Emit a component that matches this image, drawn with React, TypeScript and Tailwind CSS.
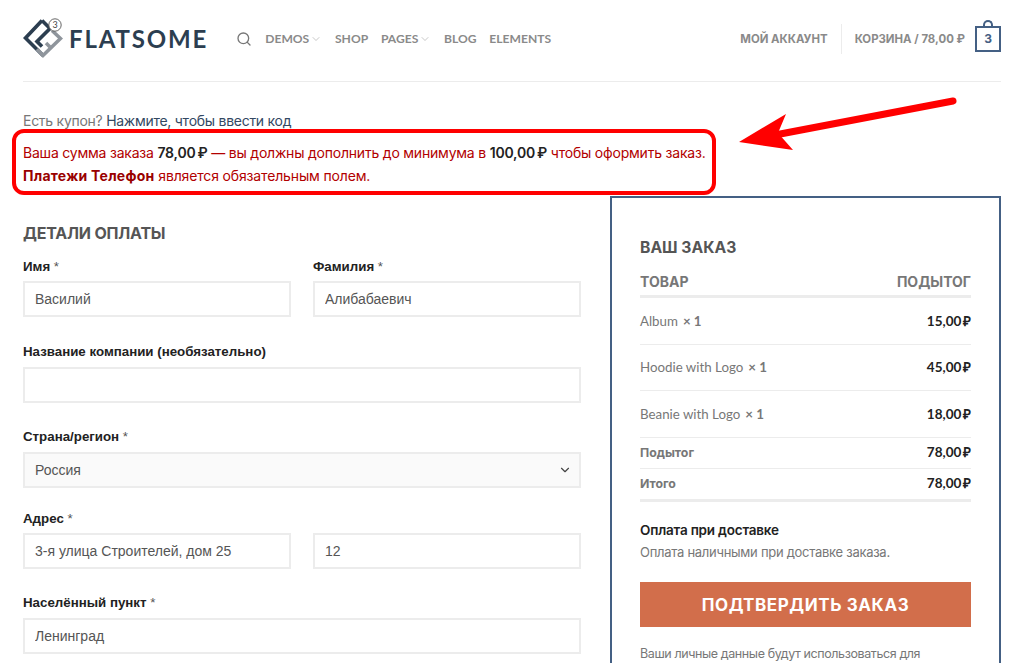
import { ChevronDown, Search } from "lucide-react"

const navItems = [
  { label: "DEMOS", caret: true },
  { label: "SHOP" },
  { label: "PAGES", caret: true },
  { label: "BLOG" },
  { label: "ELEMENTS" },
]

const products = [
  { name: "Album", price: "15,00\u2009₽" },
  { name: "Hoodie with Logo", price: "45,00\u2009₽" },
  { name: "Beanie with Logo", price: "18,00\u2009₽" },
]

function Logo() {
  return (
    <svg width="40" height="42" viewBox="0 0 40 42" fill="none">
      <path d="M19 2.5 L2.5 20 L20 37.5" stroke="#2c3e50" strokeWidth="3.6" />
      <path d="M19 2.5 L27 10.5 L14 23.5 L19 28.5" stroke="#2c3e50" strokeWidth="3.6" />
      <path d="M29 12.5 L37.5 20.5 L20 37.5 L14 31" stroke="#8f959c" strokeWidth="3.6" />
      <path d="M23 25 L27 29" stroke="#8f959c" strokeWidth="3.6" />
      <circle cx="32" cy="7" r="6.2" fill="#fff" stroke="#555" strokeWidth="0.9" />
      <text x="32" y="10" textAnchor="middle" fontSize="9" fill="#444" fontFamily="Lato, sans-serif">
        3
      </text>
    </svg>
  )
}

function Field({ value, className = "" }: { value?: string; className?: string }) {
  return (
    <input
      readOnly
      value={value ?? ""}
      className={`h-9 w-full border-2 border-[#ececec] bg-white px-[10px] font-['Liberation_Sans',sans-serif] text-sm text-[#555] outline-none ${className}`}
    />
  )
}

function Label({ text, required, className = "mb-[7px]" }: { text: string; required?: boolean; className?: string }) {
  return (
    <div className={`h-[17px] font-['Liberation_Sans',sans-serif] text-[13.3px] leading-[17px] font-bold text-[#222] ${className}`}>
      {text}
      {required && <span className="font-normal text-[#555]"> *</span>}
    </div>
  )
}

export default function App() {
  return (
    <div className="relative h-[663px] overflow-hidden bg-white px-[23px] font-['Inter',sans-serif]">
      {/* Header */}
      <header className="flex h-[82px] items-center border-b border-[#ececec] pb-[3px]">
        <Logo />
        <span className="ml-[6px] font-['Lato',sans-serif] text-[24px] font-bold tracking-[1.85px] text-[#2c3e50]">
          FLATSOME
        </span>
        <Search className="ml-[28px] h-[16px] w-[16px] text-[#777]" strokeWidth={2} />
        <nav className="ml-[13px] flex items-center gap-[12.75px] font-['Lato',sans-serif] text-[12.1px] font-bold text-[#8a8a8a]">
          {navItems.map((item) => (
            <span key={item.label} className="flex items-center">
              {item.label}
              {item.caret && <ChevronDown className="ml-[1px] h-[12px] w-[12px] text-[#aaa]" strokeWidth={1.3} />}
            </span>
          ))}
        </nav>
        <div className="ml-auto flex items-center text-[11.4px] font-bold text-[#8a8a8a]">
          <span className="pt-[1px]">МОЙ АККАУНТ</span>
          <div className="mx-[13px] h-[30px] w-px bg-[#ececec]" />
          <span className="pt-[1px]">КОРЗИНА / 78,00 ₽</span>
          <div className="relative ml-[10px] flex h-[26px] w-[26px] items-center justify-center border-2 border-[#446084] text-[12px] font-bold text-[#446084]">
            3
            <div className="absolute -top-[8px] left-[6px] h-[7px] w-[10px] rounded-t-full border-2 border-b-0 border-[#446084]" />
          </div>
        </div>
      </header>

      {/* Notices */}
      <div className="mt-[31px] h-[16px] text-sm leading-[16px] tracking-[-0.27px] text-[#777]">
        Есть купон? <span className="text-[#334862]">Нажмите, чтобы ввести код</span>
      </div>
      <div className="-mx-[11px] h-[66px] w-[704px] rounded-xl border-4 border-[#f00] px-[7px] pt-[8px] text-sm leading-[23px] tracking-[-0.21px] whitespace-nowrap text-[#b20000]">
        <div>
          Ваша сумма заказа <b className="font-semibold text-[#222]">78,00{"\u2009"}₽</b> — вы должны дополнить до минимума в{" "}
          <b className="font-semibold text-[#222]">100,00{"\u2009"}₽</b> чтобы оформить заказ.
        </div>
        <div className="tracking-[-0.15px]">
          <b className="font-bold tracking-[0.25px] text-[#990000]">Платежи Телефон</b> является обязательным полем.
        </div>
      </div>

      <div className="mt-[1px] flex gap-[29px]">
        {/* Billing */}
        <div className="w-[558px] shrink-0 pt-[27px]">
          <h3 className="mb-[15px] h-[20px] text-[16px] leading-[20px] font-bold tracking-[-0.2px] text-[#555]">ДЕТАЛИ ОПЛАТЫ</h3>
          <div className="grid grid-cols-2 gap-x-[22px]">
            <div>
              <Label text="Имя" required className="mb-[6px]" />
              <Field value="Василий" />
            </div>
            <div>
              <Label text="Фамилия" required className="mb-[6px]" />
              <Field value="Алибабаевич" />
            </div>
          </div>
          <div className="mt-[26px]">
            <Label text="Название компании (необязательно)" />
            <Field />
          </div>
          <div className="mt-[25px]">
            <Label text="Страна/регион" required />
            <div className="flex h-9 items-center justify-between border-2 border-[#ececec] bg-[#fafafa] pr-[7px] pl-[10px] font-['Liberation_Sans',sans-serif] text-sm text-[#555]">
              Россия
              <ChevronDown className="h-[14px] w-[14px] text-[#444]" strokeWidth={2} />
            </div>
          </div>
          <div className="mt-[22px]">
            <Label text="Адрес" required className="mb-[6px]" />
            <div className="grid grid-cols-2 gap-x-[22px]">
              <Field value="3-я улица Строителей, дом 25" />
              <Field value="12" />
            </div>
          </div>
          <div className="mt-[25px]">
            <Label text="Населённый пункт" required />
            <Field value="Ленинград" />
          </div>
        </div>

        {/* Order */}
        <div className="h-[520px] w-[391px] shrink-0 border-2 border-[#446084] px-[28px] pt-[40px]">
          <h3 className="mb-[16px] h-[20px] text-[15.7px] leading-[20px] font-bold text-[#555]">ВАШ ЗАКАЗ</h3>
          <div className="flex h-[24px] justify-between border-b-[3px] border-[#ececec] pb-[4px] text-sm leading-[16px] font-bold text-[#777]">
            <span>ТОВАР</span>
            <span>ПОДЫТОГ</span>
          </div>
          {products.map((p) => (
            <div key={p.name} className="flex h-[46.5px] items-center justify-between border-b border-[#ececec]">
              <span className="pt-[2px] font-['Lato',sans-serif] text-[13.3px] text-[#777]">
                {p.name}
                <b className="ml-[5px] font-bold">× 1</b>
              </span>
              <span className="font-['Lato',sans-serif] text-[13.5px] font-bold text-[#222]">{p.price}</span>
            </div>
          ))}
          <div className="flex h-[31px] items-center justify-between border-b border-[#ececec]">
            <span className="pt-[1px] text-[12.3px] font-bold text-[#777]">Подытог</span>
            <span className="font-['Lato',sans-serif] text-[13.5px] font-bold text-[#222]">78,00{"\u2009"}₽</span>
          </div>
          <div className="flex h-[33px] items-center justify-between border-b-[3px] border-[#ececec]">
            <span className="pt-[2px] text-[12.3px] font-bold text-[#777]">Итого</span>
            <span className="font-['Lato',sans-serif] text-[13.5px] font-bold text-[#222]">78,00{"\u2009"}₽</span>
          </div>
          <div className="mt-[18px] h-[20px] text-[13.5px] leading-[20px] font-semibold tracking-[-0.2px] text-[#222]">Оплата при доставке</div>
          <div className="mt-[2px] h-[20px] text-[13px] leading-[20px] tracking-[-0.28px] text-[#777]">Оплата наличными при доставке заказа.</div>
          <div className="mt-[20px] flex h-[45px] items-center justify-center bg-[#d26e4b] pt-[4px] text-[17px] font-bold tracking-[0.6px] text-white">
            ПОДТВЕРДИТЬ ЗАКАЗ
          </div>
          <div className="mt-[17px] text-[12.5px] leading-[20px] tracking-[-0.4px] text-[#777]">Ваши личные данные будут использоваться для</div>
        </div>
      </div>

      {/* Annotation arrow */}
      <svg className="absolute top-[90px] left-[730px]" width="240" height="70" viewBox="0 0 240 70" fill="none">
        <path d="M223 11 L45 45" stroke="#f00" strokeWidth="7" strokeLinecap="round" />
        <path d="M9 52 L56 24 L48 43 L63 60 Z" fill="#f00" />
      </svg>
    </div>
  )
}
